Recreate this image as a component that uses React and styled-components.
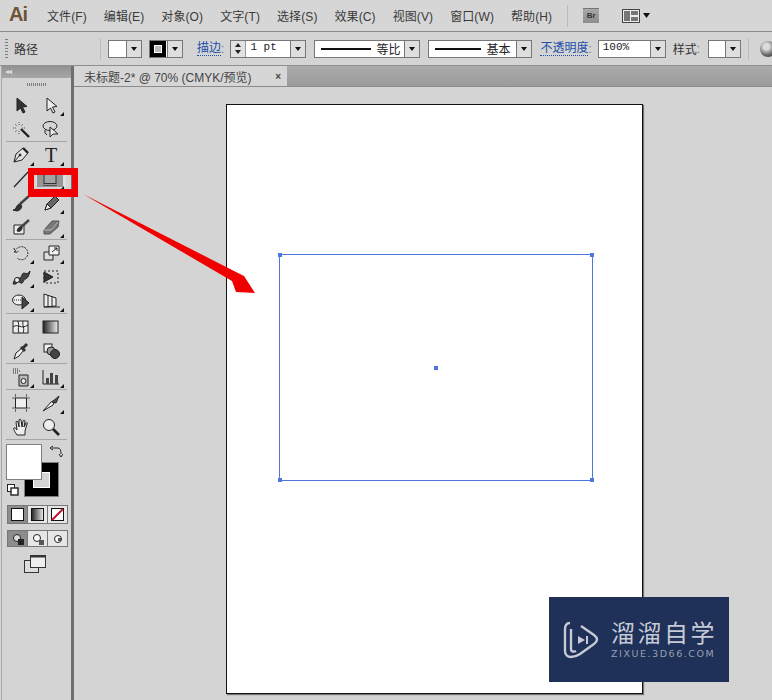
import React from 'react'
import styled, { createGlobalStyle } from 'styled-components'

const GlobalStyle = createGlobalStyle`
  html, body {
    margin: 0;
    padding: 0;
    background: #d4d4d4;
  }
  body {
    font-family: "Liberation Sans", "Noto Sans CJK SC", sans-serif;
    font-size: 12px;
    color: #333;
  }
`

const Page = styled.div`
  position: relative;
  width: 772px;
  height: 700px;
  overflow: hidden;
  display: flex;
  flex-direction: column;
  background: #d4d4d4;
`

/* ---------- menu bar ---------- */
const MenuBar = styled.div`
  height: 31px;
  flex: none;
  display: flex;
  align-items: center;
  background: #d6d6d6;
  border-bottom: 1px solid #8c8c8c;
`
const AppLogo = styled.div`
  width: 47px;
  padding-left: 9px;
  box-sizing: border-box;
  font: bold 20px "Liberation Sans", sans-serif;
  letter-spacing: -1px;
  color: #6e5337;
  margin-top: -3px;
`
const MenuList = styled.div`
  display: flex;
  gap: 17px;
`
const MenuItem = styled.span`
  font-size: 12px;
  letter-spacing: 0.1px;
  white-space: nowrap;
  color: #3a3a3a;
`
const BarDivider = styled.div`
  width: 1px;
  height: 22px;
  margin: 0 ${(p) => p.$space}px;
  background: #bcbcbc;
`
const BridgeBadge = styled.div`
  width: 16px;
  height: 14px;
  background: linear-gradient(#a8a8a8, #8d8d8d);
  border-top: 1px solid #777;
  font-size: 8px;
  font-weight: bold;
  text-align: center;
  line-height: 14px;
  color: #333;
  margin-right: 23px;
`

/* ---------- control bar ---------- */
const ControlBar = styled.div`
  height: 33px;
  flex: none;
  display: flex;
  align-items: center;
  background: #d4d4d4;
  border-bottom: 1px solid #8f8f8f;
  white-space: nowrap;
  & > * {
    flex: none;
  }
`
const Grip = styled.div`
  width: 3px;
  height: 19px;
  margin: 0 6px 0 5px;
  background: repeating-linear-gradient(#7c7c7c 0 1px, transparent 1px 3px);
`
const PathLabel = styled.span`
  font-size: 12px;
  color: #333;
  margin-right: 62px;
`
const Swatch = styled.div`
  display: flex;
  align-items: stretch;
  height: 16px;
  width: ${(p) => p.$width}px;
  margin-left: ${(p) => p.$left || 0}px;
  border: 1px solid #777;
  background: #fff;
  box-sizing: content-box;
`
const SwatchBody = styled.div`
  flex: 1;
  display: flex;
  align-items: center;
  gap: 5px;
  padding: 0 0 0 ${(p) => (p.$pad ? 6 : 0)}px;
  font-size: 12px;
  color: #222;
  white-space: nowrap;
  overflow: hidden;
`
const DropButton = styled.div`
  width: 14px;
  flex: none;
  display: flex;
  align-items: center;
  justify-content: center;
  background: #dedede;
  border-left: 1px solid #777;
  &::after {
    content: '';
    border-left: 3.5px solid transparent;
    border-right: 3.5px solid transparent;
    border-top: 4px solid #111;
  }
`
const StrokeChip = styled.div`
  width: 16px;
  height: 16px;
  box-sizing: border-box;
  background: #000;
  display: flex;
  align-items: center;
  justify-content: center;
  &::after {
    content: '';
    width: 6px;
    height: 6px;
    background: #bbb;
    border: 1px solid #fff;
  }
`
const LinkLabel = styled.span`
  margin-left: ${(p) => p.$left}px;
  font-size: 12px;
  color: #2150a8;
  border-bottom: 1px dotted #2150a8;
  line-height: 13px;
`
const PlainLabel = styled.span`
  margin-left: ${(p) => p.$left}px;
  font-size: 12px;
  color: #333;
`
const Colon = styled.span`
  color: #777;
  margin-right: ${(p) => p.$right}px;
`
const Spinner = styled.div`
  width: 14px;
  flex: none;
  display: flex;
  flex-direction: column;
  align-items: center;
  justify-content: space-evenly;
  background: #e2e2e2;
  border-right: 1px solid #999;
`
const SpinUp = styled.i`
  border-left: 3.5px solid transparent;
  border-right: 3.5px solid transparent;
  border-bottom: 4px solid #222;
`
const SpinDown = styled.i`
  border-left: 3.5px solid transparent;
  border-right: 3.5px solid transparent;
  border-top: 4px solid #222;
`
const MonoValue = styled.span`
  font: 11px "Liberation Mono", monospace;
  padding-left: 4px;
  flex: 1;
  color: #222;
`
const Line = styled.div`
  width: ${(p) => p.$width}px;
  height: 2px;
  flex: none;
  background: #111;
`
const Globe = styled.div`
  width: 16px;
  height: 16px;
  margin-left: 4px;
  border-radius: 50%;
  background: radial-gradient(circle at 40% 35%, #ddd 0 20%, #666 60%, #333 100%);
`

/* ---------- workspace ---------- */
const Workspace = styled.div`
  flex: 1;
  display: flex;
  min-height: 0;
`
const ToolPanel = styled.div`
  width: 69px;
  flex: none;
  margin-left: 1px;
  background: #d4d4d4;
  border-left: 1px solid #a8a8a8;
  border-right: 3px solid #6f6f6f;
  box-sizing: content-box;
`
const PanelHeader = styled.div`
  height: 12px;
  background: linear-gradient(#929292, #a6a6a6);
  color: #ddd;
  font-size: 8px;
  line-height: 11px;
  padding-left: 3px;
  letter-spacing: -1px;
`
const PanelGrip = styled.div`
  height: 3px;
  width: 19px;
  margin: 5px auto 7px;
  background: repeating-linear-gradient(90deg, #7f7f7f 0 1px, transparent 1px 2px);
`
const ToolGroup = styled.div`
  display: grid;
  grid-template-columns: 30px 30px;
  grid-auto-rows: 24px;
  padding: 0 0 1px 4px;
  margin-bottom: 1px;
  position: relative;
  &::after {
    content: '';
    position: absolute;
    left: 4px;
    right: 4px;
    bottom: 0;
    height: 1px;
    background: #a5a5a5;
  }
`
const ToolCell = styled.div`
  position: relative;
  display: flex;
  align-items: center;
  justify-content: center;
  &::after {
    content: '';
    display: ${(p) => (p.$more ? 'block' : 'none')};
    position: absolute;
    right: 2px;
    bottom: 1px;
    border-left: 4px solid transparent;
    border-bottom: 4px solid #111;
  }
`
const ActiveTool = styled.div`
  width: 30px;
  height: 16px;
  background: linear-gradient(90deg, #e0e0e0 0 1px, #969696 1px 27px, #e0e0e0 27px);
  display: flex;
  align-items: center;
  justify-content: flex-start;
  padding-left: 7px;
  box-sizing: border-box;
`
const ColorArea = styled.div`
  position: relative;
  height: 58px;
  margin-top: 4px;
`
const FillChip = styled.div`
  position: absolute;
  left: 4px;
  top: 0;
  width: 34px;
  height: 34px;
  background: #fff;
  border: 1px solid #808080;
  z-index: 1;
`
const StrokeBig = styled.div`
  position: absolute;
  left: 22px;
  top: 18px;
  width: 33px;
  height: 33px;
  background: #000;
  border: 1px solid #808080;
  display: flex;
  align-items: center;
  justify-content: center;
  &::after {
    content: '';
    width: 15px;
    height: 14px;
    background: #d4d4d4;
    border: 1px solid #fff;
  }
`
const SwapIcon = styled.svg`
  position: absolute;
  left: 47px;
  top: 1px;
`
const DefaultIcon = styled.svg`
  position: absolute;
  left: 5px;
  top: 40px;
`
const ModeRow = styled.div`
  display: flex;
  width: 59px;
  height: ${(p) => p.$height}px;
  margin: ${(p) => p.$top}px 0 0 5px;
  border: 1px solid #777;
  box-sizing: content-box;
`
const ModeButton = styled.div`
  flex: 1;
  display: flex;
  align-items: center;
  justify-content: center;
  background: ${(p) => (p.$on ? '#8c8c8c' : '#e6e6e6')};
  & + & {
    border-left: 1px solid #777;
  }
`
const ScreenModeIcon = styled.svg`
  display: block;
  margin: 8px 0 0 22px;
`

/* ---------- document area ---------- */
const DocArea = styled.div`
  flex: 1;
  display: flex;
  flex-direction: column;
  min-width: 0;
`
const TabStrip = styled.div`
  height: 20px;
  flex: none;
  background: linear-gradient(#ababab, #9b9b9b);
  border-bottom: 1px solid #8a8a8a;
  display: flex;
`
const DocTab = styled.div`
  width: 213px;
  display: flex;
  align-items: center;
  justify-content: space-between;
  padding: 0 6px 0 10px;
  box-sizing: border-box;
  background: #d6d6d6;
  font-size: 12px;
  color: #444;
  white-space: nowrap;
`
const CloseMark = styled.span`
  font-size: 10px;
  font-weight: bold;
  color: #444;
`
const Canvas = styled.div`
  flex: 1;
  padding: 17px 0 0 152px;
  background: #d4d4d4;
`
const Artboard = styled.div`
  position: relative;
  width: 415px;
  height: 588px;
  background: #fff;
  border: 1px solid #111;
  box-shadow: 1px 1px 1px #777;
`
const SelectionBox = styled.div`
  position: absolute;
  left: 52px;
  top: 149px;
  width: 312px;
  height: 225px;
  border: 1px solid #4d78dc;
`
const Handle = styled.i`
  position: absolute;
  width: 4px;
  height: 4px;
  background: #4d78dc;
  left: ${(p) => p.$x};
  top: ${(p) => p.$y};
  margin: -2px 0 0 -2px;
`

/* ---------- annotation + watermark ---------- */
const RedFrame = styled.div`
  position: absolute;
  left: 28px;
  top: 168px;
  width: 50px;
  height: 29px;
  box-sizing: border-box;
  border: 7px solid #f00000;
  border-width: 7px 6px 8px 6px;
`
const RedArrow = styled.svg`
  position: absolute;
  left: 80px;
  top: 190px;
`
const Watermark = styled.div`
  position: absolute;
  left: 549px;
  top: 597px;
  width: 180px;
  height: 85px;
  background: #1f3059;
  display: flex;
  align-items: center;
  padding-left: 14px;
  box-sizing: border-box;
  gap: 12px;
`
const MarkText = styled.div`
  display: flex;
  flex-direction: column;
  color: #c6cad4;
`
const MarkTitle = styled.span`
  font-size: 24px;
  line-height: 28px;
  letter-spacing: 2.5px;
  white-space: nowrap;
`
const MarkSub = styled.span`
  font: 9.5px "DejaVu Sans", sans-serif;
  letter-spacing: 1.55px;
  color: #98a0b2;
  white-space: nowrap;
`

const Icon = ({ children, size = 20 }) => (
  <svg width={size} height={size} viewBox="0 0 20 20" fill="none" stroke="#222" strokeWidth="1">
    {children}
  </svg>
)

const toolIcons = {
  arrow: <path d="M6 3 L6 16 L9.5 13 L12 18 L14 17 L11.5 12 L16 11.5 Z" fill="#333" />,
  hollow: <path d="M6 3 L6 16 L9.5 13 L12 18 L14 17 L11.5 12 L16 11.5 Z" fill="#eee" />,
  wand: (
    <>
      <path d="M10 10 L18 18" strokeWidth="2.4" />
      <path d="M8 3v3M8 12v3M2 9h3M11 9h3M4 5l2 2M12 5l-2 2M4 13l2-2" stroke="#555" strokeDasharray="1 1" />
    </>
  ),
  lasso: (
    <>
      <ellipse cx="9" cy="7" rx="7" ry="4.5" />
      <path d="M9 8 L9 18 L12 15 L17 15 Z" fill="#eee" />
      <path d="M4 11 q-1 3 2 5" />
    </>
  ),
  pen: (
    <>
      <path d="M3 17 L5 9 L12 3 L17 8 L11 15 Z" fill="#e4e4e4" />
      <path d="M3 17 L9 10" />
      <circle cx="9" cy="10" r="1" fill="#222" />
      <path d="M12 3 L17 8" strokeWidth="2.4" />
    </>
  ),
  line: <path d="M3 18 L17 3" strokeWidth="1.2" />,
  brush: (
    <>
      <path d="M9 11 L18 3" stroke="#444" strokeWidth="2.4" />
      <path d="M2 17 C6 17 5 11 9 11 C12 12 11 17 6 18 Z" fill="#333" />
    </>
  ),
  pencil: (
    <>
      <path d="M4 17 L6 11 L14 3 L18 7 L10 15 Z" fill="#666" />
      <path d="M4 17 L6 11 L10 15 Z" fill="#eee" />
    </>
  ),
  blob: (
    <>
      <path d="M3 8 H13 V17 H3 Z" fill="#eee" />
      <path d="M8 12 L18 3" strokeWidth="2.4" stroke="#444" />
      <path d="M6 14 C7 10 10 9 11 11 C11 14 8 15 6 14 Z" fill="#333" />
    </>
  ),
  eraser: (
    <>
      <path d="M3 13 L11 4 H18 L17 10 L9 17 H3 Z" fill="#777" stroke="#555" />
      <path d="M3 13 H10 L17 5" stroke="#bbb" />
    </>
  ),
  rotate: <path d="M4 9 A6.5 6.5 0 1 1 6 15 M3 5 L4 10 L8 8" strokeDasharray="2 1" />,
  scale: (
    <>
      <path d="M3 9 H12 V17 H3 Z" fill="#ddd" />
      <path d="M8 3 H18 V12 H8 Z" fill="#f2f2f2" />
      <path d="M11 9 L16 5 M13 5 H16 V8" />
    </>
  ),
  warp: (
    <>
      <path d="M2 17 C6 4 8 16 11 8 C13 3 15 10 19 4 C17 14 14 10 12 15 C10 19 7 11 5 17 Z" fill="#444" />
      <circle cx="6" cy="13" r="2.5" fill="#eee" />
    </>
  ),
  freeform: (
    <>
      <path d="M3 4 H17 V16 H3 Z" strokeDasharray="2 2" />
      <path d="M3 5 L12 10 L3 15 Z" fill="#333" />
    </>
  ),
  shape: (
    <>
      <ellipse cx="8" cy="9" rx="6.5" ry="5" fill="#eee" />
      <path d="M3 9 H14" strokeDasharray="1 1" />
      <path d="M11 6 L11 18 L18 12 Z" fill="#444" />
    </>
  ),
  perspective: <path d="M3 3 L15 7 V15 L3 16 Z M3 16 H19 M7 4 V16 M11 5 V16" fill="#eee" />,
  mesh: (
    <>
      <rect x="2" y="4" width="15" height="12" fill="#eee" />
      <path d="M2 10 C7 6 10 13 17 8 M7 4 C9 9 6 12 8 16 M12 4 C11 9 14 11 12 16" />
    </>
  ),
  gradient: (
    <>
      <defs>
        <linearGradient id="tg">
          <stop offset="0" stopColor="#222" />
          <stop offset="1" stopColor="#eee" />
        </linearGradient>
      </defs>
      <rect x="2" y="4" width="15" height="12" fill="url(#tg)" />
    </>
  ),
  dropper: (
    <>
      <path d="M3 18 L5 12 L11 7 L13 9 L8 15 Z" fill="#f0f0f0" />
      <path d="M10 6 L14 10 M12 7 L16 3" strokeWidth="3" stroke="#333" />
    </>
  ),
  blend: (
    <>
      <rect x="3" y="3" width="8" height="8" fill="#eee" />
      <circle cx="10" cy="10" r="4" fill="#999" />
      <circle cx="14" cy="13" r="4.5" fill="#444" />
    </>
  ),
  spray: (
    <>
      <path d="M8 8 H17 V19 H8 Z" fill="#bbb" />
      <circle cx="12.5" cy="14" r="2.5" fill="#eee" />
      <path d="M2 2h6M2 4h8M2 6h6" strokeDasharray="1 1" />
    </>
  ),
  bars: (
    <>
      <path d="M2 3 V17 H18" />
      <path d="M5 11h3v6H5z M9 6h3v11H9z M14 8h3v9h-3z" fill="#444" stroke="none" />
    </>
  ),
  artboard: (
    <>
      <rect x="4.5" y="5" width="11" height="10" fill="#eee" />
      <path d="M1 5h3M16 5h3M1 15h3M16 15h3M4.5 1v3M15.5 1v3M4.5 16v3M15.5 16v3" stroke="#666" />
    </>
  ),
  slice: (
    <>
      <path d="M2 18 L10 9 L14 7 L12 12 Z" fill="#eee" />
      <path d="M11 9 L18 3 L15 10 Z" fill="#555" />
    </>
  ),
  hand: (
    <path
      d="M6 18 C4 15 2 12 3 11 C4 10 5 12 6 13 L5 5 C5 4 7 4 7 5 L8 10 L8 3 C8 2 10 2 10 3 L11 10 L12 4 C12 3 14 3 14 4 L13 10 L15 6 C16 5 17 6 16 7 L14 14 L14 18 Z"
      fill="#eee"
    />
  ),
  zoom: (
    <>
      <circle cx="8" cy="8" r="5.5" fill="#eee" />
      <path d="M12 12 L18 18" strokeWidth="2.6" />
    </>
  ),
}

const toolGroups = [
  [['arrow'], ['hollow', true], ['wand'], ['lasso']],
  [['pen', true], ['type', true], ['line', true], ['rect', true], ['brush'], ['pencil', true], ['blob'], ['eraser', true]],
  [['rotate', true], ['scale', true], ['warp', true], ['freeform'], ['shape', true], ['perspective', true]],
  [['mesh'], ['gradient'], ['dropper', true], ['blend']],
  [['spray', true], ['bars', true]],
  [['artboard'], ['slice', true], ['hand'], ['zoom']],
]

const TypeGlyph = styled.span`
  font: 20px "Liberation Serif", serif;
  color: #222;
`

const renderTool = (name) => {
  if (name === 'type') return <TypeGlyph>T</TypeGlyph>
  if (name === 'rect') {
    return (
      <ActiveTool>
        <svg width="14" height="14" viewBox="0 0 14 14" fill="none">
          <rect x="1" y="0.5" width="12" height="11" fill="#a4a4a4" stroke="#333" />
          <path d="M0 13.5 H14" stroke="#555" />
        </svg>
      </ActiveTool>
    )
  }
  return <Icon>{toolIcons[name]}</Icon>
}

const DropSwatch = ({ width, left, pad, children }) => (
  <Swatch $width={width} $left={left}>
    <SwatchBody $pad={pad}>{children}</SwatchBody>
    <DropButton />
  </Swatch>
)

const menus = ['文件(F)', '编辑(E)', '对象(O)', '文字(T)', '选择(S)', '效果(C)', '视图(V)', '窗口(W)', '帮助(H)']

export default function App() {
  return (
    <Page>
      <GlobalStyle />
      <MenuBar>
        <AppLogo>Ai</AppLogo>
        <MenuList>
          {menus.map((m) => (
            <MenuItem key={m}>{m}</MenuItem>
          ))}
        </MenuList>
        <BarDivider $space={15} />
        <BridgeBadge>Br</BridgeBadge>
        <svg width="32" height="16" viewBox="0 0 32 16">
          <rect x="0.5" y="1.5" width="17" height="13" fill="#eee" stroke="#444" />
          <rect x="2" y="3" width="6" height="10" fill="#777" />
          <rect x="9" y="3" width="7" height="4" fill="#777" />
          <rect x="9" y="9" width="7" height="4" fill="#777" />
          <path d="M21 5 h7 l-3.5 5 z" fill="#111" />
        </svg>
      </MenuBar>

      <ControlBar>
        <Grip />
        <PathLabel>路径</PathLabel>
        <BarDivider $space={0} />
        <DropSwatch width={32} left={7} />
        <DropSwatch width={32} left={7}>
          <StrokeChip />
        </DropSwatch>
        <LinkLabel $left={14}>描边</LinkLabel>
        <Colon $right={6}>:</Colon>
        <Swatch $width={74}>
          <Spinner>
            <SpinUp />
            <SpinDown />
          </Spinner>
          <MonoValue>1 pt</MonoValue>
          <DropButton />
        </Swatch>
        <DropSwatch width={104} left={8} pad>
          <Line $width={50} />
          等比
        </DropSwatch>
        <DropSwatch width={102} left={8} pad>
          <Line $width={46} />
          基本
        </DropSwatch>
        <LinkLabel $left={8}>不透明度</LinkLabel>
        <Colon $right={6}>:</Colon>
        <Swatch $width={66}>
          <MonoValue>100%</MonoValue>
          <DropButton />
        </Swatch>
        <PlainLabel $left={7}>样式</PlainLabel>
        <Colon $right={8}>:</Colon>
        <DropSwatch width={31} />
        <BarDivider $space={7} />
        <Globe />
      </ControlBar>

      <Workspace>
        <ToolPanel>
          <PanelHeader>◂◂</PanelHeader>
          <PanelGrip />
          {toolGroups.map((group, i) => (
            <ToolGroup key={i}>
              {group.map(([name, more]) => (
                <ToolCell key={name} $more={more}>
                  {renderTool(name)}
                </ToolCell>
              ))}
            </ToolGroup>
          ))}
          <ColorArea>
            <FillChip />
            <StrokeBig />
            <SwapIcon width="14" height="14" viewBox="0 0 14 14" fill="none" stroke="#222">
              <path d="M3 3 H9 Q12 3 12 9 M1 3 L4 1 M1 3 L4 5 M12 12 L10 9 M12 12 L14 9" />
            </SwapIcon>
            <DefaultIcon width="12" height="12" viewBox="0 0 12 12">
              <rect x="0.5" y="0.5" width="7" height="7" fill="#fff" stroke="#222" />
              <rect x="4" y="4" width="7" height="7" fill="#fff" stroke="#222" strokeWidth="1.4" />
            </DefaultIcon>
          </ColorArea>
          <ModeRow $top={3} $height={17}>
            <ModeButton $on>
              <svg width="13" height="13"><rect x="0.5" y="0.5" width="12" height="12" fill="#fff" stroke="#111" /></svg>
            </ModeButton>
            <ModeButton>
              <svg width="13" height="13">
                <defs>
                  <linearGradient id="mg">
                    <stop offset="0" stopColor="#222" />
                    <stop offset="1" stopColor="#eee" />
                  </linearGradient>
                </defs>
                <rect x="0.5" y="0.5" width="12" height="12" fill="url(#mg)" stroke="#111" />
              </svg>
            </ModeButton>
            <ModeButton>
              <svg width="13" height="13">
                <rect x="0.5" y="0.5" width="12" height="12" fill="#fff" stroke="#111" />
                <path d="M1 12 L12 1" stroke="#c8102e" strokeWidth="2" />
              </svg>
            </ModeButton>
          </ModeRow>
          <ModeRow $top={6} $height={15}>
            <ModeButton $on>
              <svg width="12" height="12">
                <circle cx="5" cy="5" r="3.5" fill="#ddd" stroke="#222" />
                <rect x="6" y="6" width="6" height="6" fill="#222" />
              </svg>
            </ModeButton>
            <ModeButton>
              <svg width="12" height="12">
                <circle cx="5" cy="5" r="3.5" fill="#fff" stroke="#222" />
                <rect x="7" y="7" width="5" height="5" fill="#555" />
              </svg>
            </ModeButton>
            <ModeButton>
              <svg width="12" height="12">
                <circle cx="6" cy="6" r="3.5" fill="#fff" stroke="#222" />
                <rect x="6" y="5" width="3" height="3" fill="#555" />
              </svg>
            </ModeButton>
          </ModeRow>
          <ScreenModeIcon width="22" height="18" viewBox="0 0 22 18">
            <rect x="0.5" y="5.5" width="14" height="12" fill="#ddd" stroke="#333" />
            <rect x="6.5" y="0.5" width="15" height="12" fill="#eee" stroke="#333" />
            <path d="M7 1.5 H21" stroke="#333" strokeWidth="2" />
          </ScreenModeIcon>
        </ToolPanel>

        <DocArea>
          <TabStrip>
            <DocTab>
              未标题-2* @ 70% (CMYK/预览)
              <CloseMark>×</CloseMark>
            </DocTab>
          </TabStrip>
          <Canvas>
            <Artboard>
              <SelectionBox>
                <Handle $x="0" $y="0" />
                <Handle $x="100%" $y="0" />
                <Handle $x="0" $y="100%" />
                <Handle $x="100%" $y="100%" />
                <Handle $x="50%" $y="50%" />
              </SelectionBox>
            </Artboard>
          </Canvas>
        </DocArea>
      </Workspace>

      <RedFrame />
      <RedArrow width="180" height="110" viewBox="0 0 180 110">
        <path d="M3 4 L156 82 L164 86 L175 103 L156 102 L152 91 Z" fill="#f00000" />
      </RedArrow>

      <Watermark>
        <svg width="36" height="40" viewBox="0 0 36 40" fill="none" stroke="#c6cad4" strokeWidth="2.4">
          <path d="M7 3 C3 3 2 6 2 9 V31 C2 35 5 37 8 37 C12 37 14 36 17 34 L31 24 C35 21 35 18 31 15 L18 6" />
          <path d="M8 9 V29 C8 32 11 32 13 31" />
          <path d="M15 16 L22 20 L15 24 Z" fill="#c6cad4" stroke="none" />
          <path d="M24 16 V24" strokeWidth="2" />
        </svg>
        <MarkText>
          <MarkTitle>溜溜自学</MarkTitle>
          <MarkSub>ZIXUE.3D66.COM</MarkSub>
        </MarkText>
      </Watermark>
    </Page>
  )
}
